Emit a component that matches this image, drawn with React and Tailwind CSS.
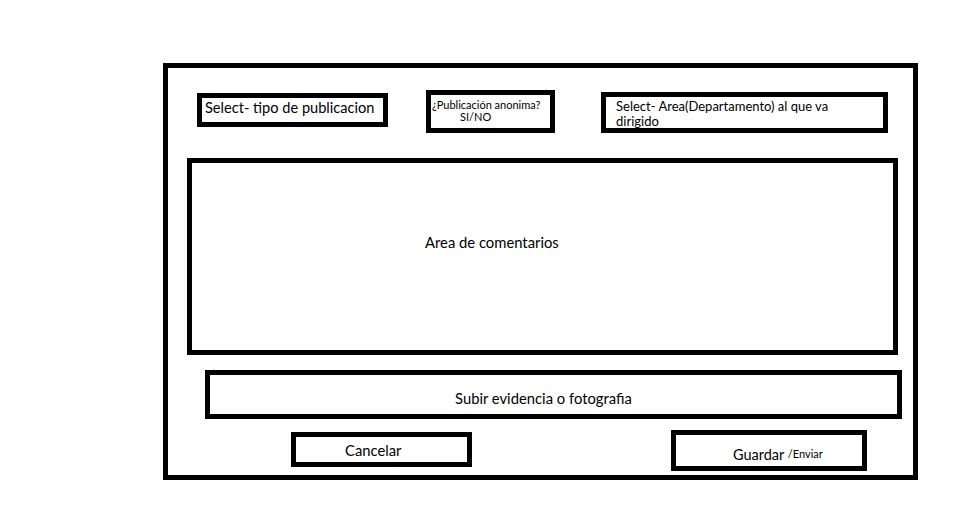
import React from 'react';

export default function App() {
  return (
    <div className="w-[978px] h-[526px] bg-white text-black font-['Lato',sans-serif] pl-[163px] pt-[63px]">
      <div className="w-[755px] h-[417px] border-[5px] border-black flex flex-col">
        {/* top row: three selects */}
        <div className="flex items-start pt-[22px]">
          <div className="ml-[29px] mt-[3px] w-[191px] h-[34px] border-[5px] border-black pl-[3px] text-[14.6px] leading-[19px]">
            Select- tipo de publicacion
          </div>
          <div className="ml-[38px] w-[129px] h-[43px] border-[5px] border-black pl-[1px] pt-[4px] text-[11px] leading-[12px]">
            <div>¿Publicación anonima?</div>
            <div className="pl-[28px]">SI/NO</div>
          </div>
          <div className="ml-[46px] mt-[2px] w-[287px] h-[41px] border-[5px] border-black pl-[10px] pt-[2px] text-[13px] leading-[15px]">
            <div>Select- Area(Departamento) al que va</div>
            <div>dirigido</div>
          </div>
        </div>

        {/* comments area */}
        <div className="ml-[19px] mt-[25px] w-[711px] h-[197px] border-[5px] border-black pl-[233px] pt-[70px] text-[14.8px] leading-[19px]">
          Area de comentarios
        </div>

        {/* upload */}
        <div className="ml-[37px] mt-[15px] w-[697px] h-[49px] border-[5px] border-black pl-[245px] pt-[14px] text-[14.8px] leading-[19px]">
          Subir evidencia o fotografia
        </div>

        {/* buttons */}
        <div className="flex items-start mt-[11px]">
          <div className="ml-[123px] mt-[2px] w-[181px] h-[35px] border-[5px] border-black pl-[49px] pt-[4px] text-[14.8px] leading-[19px]">
            Cancelar
          </div>
          <div className="ml-[199px] w-[196px] h-[41px] border-[5px] border-black pl-[57px] pt-[10px] text-[14.5px] leading-[18px]">
            Guardar <span className="text-[11px] align-[2px]">/Enviar</span>
          </div>
        </div>
      </div>
    </div>
  );
}
